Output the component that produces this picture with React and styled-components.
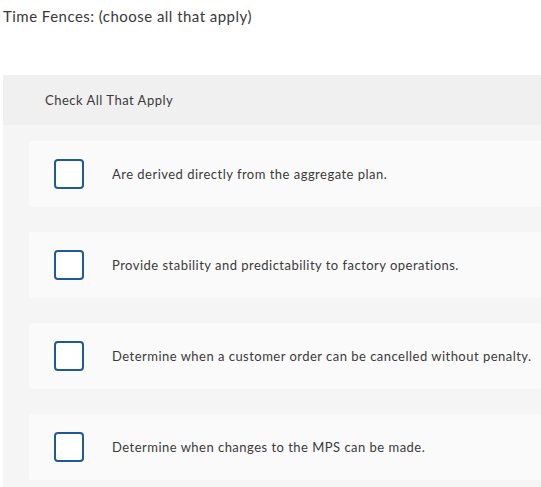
import React from "react";
import styled, { createGlobalStyle } from "styled-components";

const Global = createGlobalStyle`
  html, body { margin: 0; padding: 0; background: #ffffff; }
  body { font-family: "Lato", "Open Sans", sans-serif; color: #333333; }
`;

const Page = styled.div`
  padding: 6px 0 0 3px;
`;

const Title = styled.div`
  font-size: 15px;
  line-height: 20px;
  color: #3a3a3a;
  margin-bottom: 49px;
  letter-spacing: 0.47px;
`;

const Panel = styled.div`
  background: #f5f5f5;
  padding-bottom: 10px;
`;

const PanelHeader = styled.div`
  background: #f0f0f0;
  height: 50px;
  display: flex;
  align-items: center;
  padding-left: 42px;
  font-size: 13px;
  color: #3a3a3a;
  letter-spacing: 0.5px;
`;

const List = styled.div`
  display: flex;
  flex-direction: column;
  gap: 25px;
  padding: 16px 0 0 26px;
`;

const Card = styled.label`
  background: #fafafa;
  height: 66px;
  border-radius: 3px 0 0 3px;
  display: flex;
  align-items: center;
  padding-left: 25px;
  gap: 28px;
  cursor: pointer;
`;

const Box = styled.span`
  width: 26px;
  height: 26px;
  border: 2px solid #1f5a93;
  border-radius: 4px;
  background: #ffffff;
  flex: none;
`;

const Text = styled.span`
  font-size: 13px;
  color: #3a3a3a;
  letter-spacing: 0.48px;
`;

const options = [
  "Are derived directly from the aggregate plan.",
  "Provide stability and predictability to factory operations.",
  "Determine when a customer order can be cancelled without penalty.",
  "Determine when changes to the MPS can be made.",
];

export default function App() {
  return (
    <>
      <Global />
      <Page>
        <Title>Time Fences: (choose all that apply)</Title>
        <Panel>
          <PanelHeader>Check All That Apply</PanelHeader>
          <List>
            {options.map((o) => (
              <Card key={o}>
                <Box />
                <Text>{o}</Text>
              </Card>
            ))}
          </List>
        </Panel>
      </Page>
    </>
  );
}
